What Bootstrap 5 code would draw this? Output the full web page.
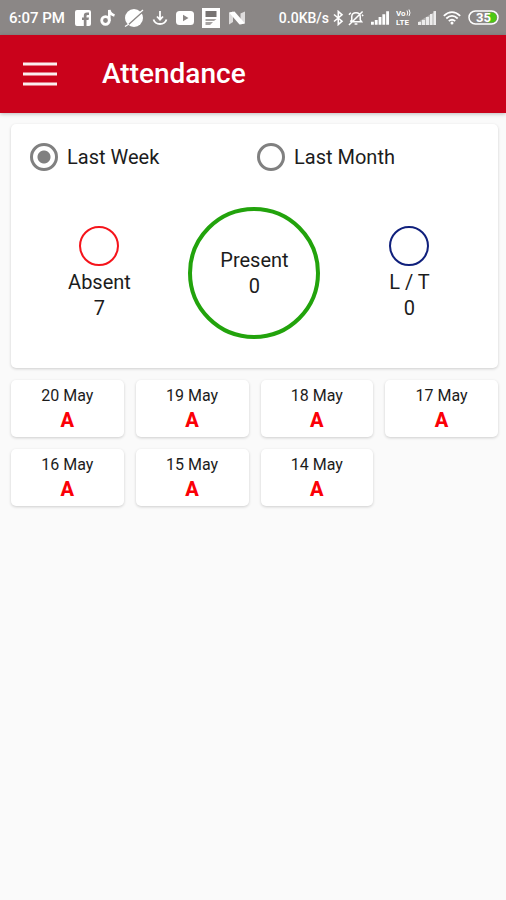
<!DOCTYPE html>
<html lang="en">
<head>
<meta charset="utf-8">
<meta name="viewport" content="width=device-width, initial-scale=1">
<title>Attendance</title>
<link href="https://cdn.jsdelivr.net/npm/bootstrap@5.3.0/dist/css/bootstrap.min.css" rel="stylesheet">
<style>
  body { background: #fafafa; color: #1c1c1c; font-family: Roboto, "Liberation Sans", sans-serif; font-size: 20px; line-height: 26px; }
  .status-bar { background: #8b8786; color: #fff; height: 35px; padding: 0 7px 0 9px; font-size: 14px; line-height: 18px; font-weight: 500; }
  .status-bar svg { display: block; flex: none; }
  .status-left { gap: 8px; }
  .status-right { gap: 7px; }
  .clock { margin-right: 2px; font-size: 15px; }
  .app-bar { background: #ca021b; height: 78px; padding: 0 23px; gap: 45px; box-shadow: 0 1px 4px rgba(0,0,0,.25); }
  .app-bar h1 { font-size: 28px; line-height: 38px; font-weight: 500; }
  .content { padding: 11px 8px 16px 11px; }
  .panel { background: #fff; border-radius: 5px; box-shadow: 0 1px 3px rgba(0,0,0,.18); }
  .summary { padding: 19px 11px 29px; }
  .period { padding: 0 3px 0 8px; }
  .period-option { gap: 9px; height: 28px; }
  .period-option input { appearance: none; flex: none; width: 28px; height: 28px; margin: 0; border: 3px solid #808080; border-radius: 50%; background: #fff; }
  .period-option input:checked { background: radial-gradient(circle, #808080 6px, #fff 7px); }
  .totals { margin-top: 36px; }
  .ring { width: 40px; height: 40px; border: 2px solid; border-radius: 50%; margin-bottom: 3px; }
  .ring-absent { border-color: #f5141b; }
  .ring-late { border-color: #10207c; }
  .ring-present { width: 132px; height: 132px; border: 4px solid #22a30c; border-radius: 50%; }
  .days { margin-top: 12px; display: grid; grid-template-columns: repeat(4, 1fr); gap: 12px; }
  .day { height: 57px; padding-top: 4px; font-size: 16px; line-height: 24px; }
  .day strong { color: #fb0007; font-size: 20px; font-weight: 800; }
</style>
<script src="https://cdn.jsdelivr.net/npm/bootstrap@5.3.0/dist/js/bootstrap.bundle.min.js"></script>
</head>
<body>
<div class="status-bar d-flex align-items-center justify-content-between">
  <div class="status-left d-flex align-items-center">
    <span class="clock text-nowrap">6:07 PM</span>
    <svg width="16" height="16" viewBox="0 0 16 16" aria-hidden="true"><path fill="#fff" fill-rule="evenodd" d="M2 0H14Q16 0 16 2V14Q16 16 14 16H11.500V10H13.500L14 7.500H11.500V6Q11.500 5 12.500 5H14V2.500H12Q8.800 2.500 8.800 5.700V7.500H7V10H8.800V16H2Q0 16 0 14V2Q0 0 2 0Z"/></svg>
    <svg width="17" height="18" viewBox="0 0 17 18" aria-hidden="true"><circle cx="6.500" cy="11.500" r="3.800" fill="none" stroke="#fff" stroke-width="2.800"/><path d="M10.300 12V1Q11 5 15.500 6.500" fill="none" stroke="#fff" stroke-width="2.600"/></svg>
    <svg width="20" height="20" viewBox="0 0 20 20" aria-hidden="true"><circle cx="10" cy="10" r="9" fill="#fff"/><path d="M3.500 17.500 18.500 4" stroke="#8b8786" stroke-width="1.300"/><path d="M1 18.500 5 16M16 4.500 19 2" stroke="#fff" stroke-width="1.300"/></svg>
    <svg width="16" height="16" viewBox="0 0 16 16" fill="none" stroke="#fff" stroke-width="1.800" aria-hidden="true"><path d="M8 1V9M5 6.500 8 9.700 11 6.500M1.500 9.500Q3 14 8 14T14.500 9.500"/></svg>
    <svg width="18" height="14" viewBox="0 0 18 14" aria-hidden="true"><rect width="18" height="14" rx="3.500" fill="#fff"/><path d="M7 3.800 12.500 7 7 10.200Z" fill="#8b8786"/></svg>
    <svg width="18" height="20" viewBox="0 0 18 20" aria-hidden="true"><path d="M0 0H18V20H0Z" fill="#fff"/><path d="M3.500 3H14.500V9H3.500Z" fill="#777372"/><path d="M3.500 11H14.500L12 13H3.500ZM3.500 14H11L8 17H3.500Z" fill="#a7a4a3"/></svg>
    <svg width="18" height="16" viewBox="0 0 18 16" aria-hidden="true"><path d="M1 3 5 1.500V12L1 14.500ZM12.500 3.500 17 1.500V13L12.500 14.500Z" fill="#dedcdc"/><path d="M1 2.500 6.500 1.500 17 13.500 11.500 14.500Z" fill="#fff"/></svg>
  </div>
  <div class="status-right d-flex align-items-center">
    <div class="d-flex align-items-center gap-1">
      <span class="text-nowrap">0.0KB/s</span>
      <svg width="11" height="16" viewBox="0 0 11 16" fill="none" stroke="#fff" stroke-width="1.600" aria-hidden="true"><path d="M1 4.500 9 11.200 5.300 14.500V1.500L9 4.800 1 11.500"/></svg>
      <svg width="16" height="18" viewBox="0 0 17 18" fill="none" stroke="#fff" stroke-width="1.600" aria-hidden="true"><path d="M3 13H14.500L13 11V7.500Q13 3.500 8.500 3.500T4 7.500V11L2.500 13M7 15.500H10M1 16.500 15.500 2M1 5.500 3 3.500M16 7 15 5.500"/></svg>
    </div>
    <svg width="18" height="14" viewBox="0 0 19 14" fill="#fff" aria-hidden="true"><path d="M0 11H3V14H0ZM4 9H7V14H4ZM8 6H11V14H8ZM12 3H15V14H12ZM16 0H19V14H16Z"/></svg>
    <svg width="15" height="17" viewBox="0 0 15 17" fill="#fff" font-family="Roboto, sans-serif" font-weight="700" font-size="8" aria-label="VoLTE"><text x="0" y="7">Vo</text><text x="0" y="16">LTE</text><path d="M11 1.500Q12.500 4 11 6.500M13 .5Q15 4 13 7" fill="none" stroke="#fff"/></svg>
    <svg width="18" height="14" viewBox="0 0 18 14" aria-hidden="true"><path d="M0 14V11L18 0V14Z" fill="#fff" opacity=".35"/><path d="M0 11H3V14H0ZM4 9H7V14H4ZM8 6H11V14H8ZM12 3H14.500V14H12ZM15.500 0H18V14H15.500Z" fill="#fff" opacity=".75"/></svg>
    <svg width="18" height="14" viewBox="0 0 18 14" fill="none" stroke="#fff" stroke-width="1.800" aria-hidden="true"><path d="M.8 4.800Q9-2.600 17.200 4.800M3.300 7.500Q9 2.300 14.700 7.500M5.800 10.200Q9 7.300 12.200 10.200"/><circle cx="9" cy="12" r="1.500" fill="#fff" stroke="none"/></svg>
    <svg width="31" height="15" viewBox="0 0 31 15" aria-label="Battery 35%"><rect x="1" y="1" width="29" height="13" rx="6.500" fill="#8b8786" stroke="#fff" stroke-width="1.500"/><path d="M20 2.500H23.500Q28.500 2.500 28.500 7.500T23.500 12.500H20Z" fill="#4cc814"/><text x="15.500" y="12" text-anchor="middle" fill="#fff" font-family="Roboto, sans-serif" font-size="13" font-weight="700">35</text></svg>
  </div>
</div>

<header class="app-bar d-flex align-items-center">
  <button class="btn p-0 border-0 d-flex" type="button" aria-label="Open menu">
    <svg width="34" height="24" viewBox="0 0 34 24" stroke="#fff" stroke-width="3" aria-hidden="true"><path d="M0 2H34M0 12H34M0 22H34" opacity=".93"/></svg>
  </button>
  <h1 class="m-0 text-white">Attendance</h1>
</header>

<main class="content">
  <section class="panel summary">
    <div class="period row g-0">
      <div class="col-6 period-option d-flex align-items-center">
        <input type="radio" name="period" id="week" checked><label for="week">Last Week</label>
      </div>
      <div class="col-6 period-option d-flex align-items-center">
        <input type="radio" name="period" id="month"><label for="month">Last Month</label>
      </div>
    </div>
    <div class="totals row g-0 align-items-center text-center">
      <div class="col-4 d-flex flex-column align-items-center">
        <span class="ring ring-absent"></span><span>Absent</span><span>7</span>
      </div>
      <div class="col-4 d-flex justify-content-center">
        <div class="ring-present d-flex flex-column align-items-center justify-content-center"><span>Present</span><span>0</span></div>
      </div>
      <div class="col-4 d-flex flex-column align-items-center">
        <span class="ring ring-late"></span><span>L / T</span><span>0</span>
      </div>
    </div>
  </section>
  <section class="days" aria-label="Daily attendance">
    <div class="panel day d-flex flex-column align-items-center"><span>20 May</span><strong>A</strong></div>
    <div class="panel day d-flex flex-column align-items-center"><span>19 May</span><strong>A</strong></div>
    <div class="panel day d-flex flex-column align-items-center"><span>18 May</span><strong>A</strong></div>
    <div class="panel day d-flex flex-column align-items-center"><span>17 May</span><strong>A</strong></div>
    <div class="panel day d-flex flex-column align-items-center"><span>16 May</span><strong>A</strong></div>
    <div class="panel day d-flex flex-column align-items-center"><span>15 May</span><strong>A</strong></div>
    <div class="panel day d-flex flex-column align-items-center"><span>14 May</span><strong>A</strong></div>
  </section>
</main>
</body>
</html>
